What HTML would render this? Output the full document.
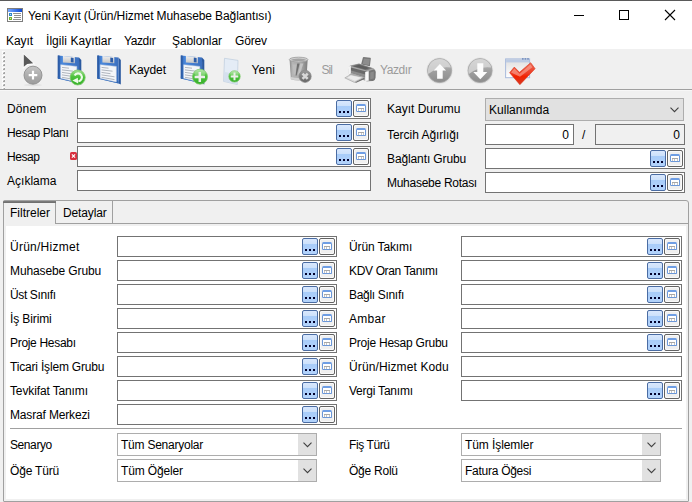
<!DOCTYPE html><html lang="tr"><head><meta charset="utf-8"><title>Yeni Kayıt (Ürün/Hizmet Muhasebe Bağlantısı)</title><style>
*{box-sizing:border-box;margin:0;padding:0}
html,body{width:692px;height:502px;overflow:hidden;background:#f0f0f0}
body{position:relative;font-family:"Liberation Sans",sans-serif;font-size:12px;color:#000}
.abs{position:absolute}
.t{position:absolute;white-space:nowrap;line-height:14px;height:14px}
.f{position:absolute;height:21px;border:1px solid #737373;background:#fff}
.f.dis{background:#f0f0f0}
.b1{position:absolute;top:1px;right:18px;width:16px;height:17px;border:1px solid #4a6ca3;border-radius:2px;background:linear-gradient(#d9e8fd 0,#cde1fb 33%,#a8ccf9 34%,#b3d3fb 100%)}
.b1 i{position:absolute;top:10px;width:2px;height:2px;background:#00002c}
.b2{position:absolute;top:1px;right:1px;width:16px;height:17px;border:1px solid #636363;border-radius:2px;background:#f0f0f0;box-shadow:inset 0 0 0 1px #fafafa}
.b2 b{position:absolute;left:2px;top:3px;width:10px;height:8px;border:1px solid #6b97d8;border-top:2px solid #6f9ee4;border-radius:1.5px;background:#fff}
.b2 b:after{content:"";position:absolute;left:1px;top:2px;width:6px;height:2px;border-top:1px solid #a8a8a8;background:linear-gradient(90deg,#c4c4c4 0 1px,transparent 1px 2.5px,#c4c4c4 2.5px 3.5px,transparent 3.5px 5px,#c4c4c4 5px 6px)}
.cb{position:absolute;height:23px;border:1px solid #adadad;background:#fff}
.cb .tx{position:absolute;left:3px;top:4px;line-height:14px;white-space:nowrap}
.cb .ar{position:absolute;top:0;right:0;width:18px;height:21px;background:#e1e1e1}
.cb svg{position:absolute;right:4px;top:8px}
</style></head><body>
<div class="abs" style="left:0;top:0;width:692px;height:49px;background:#fff"></div>
<div class="abs" style="left:0;top:0;width:692px;height:1px;background:#5a5a5a"></div>
<svg class="abs" style="left:7px;top:8px" width="16" height="14" viewBox="0 0 16 14">
<defs><linearGradient id="gIc" x1="0" y1="0" x2="1" y2="0"><stop offset="0" stop-color="#78a8ff"/><stop offset="1" stop-color="#0c48d6"/></linearGradient></defs>
<rect x="0.5" y="0.5" width="15" height="13" fill="#fff" stroke="#7d7d7d"/>
<rect x="1" y="1" width="14" height="3" fill="url(#gIc)"/>
<rect x="2" y="5" width="3" height="3" fill="#2f86c8"/><rect x="2" y="9" width="3" height="3" fill="#6fae2e"/>
<rect x="3" y="6" width="1" height="1" fill="#bfe0f4"/><rect x="3" y="10" width="1" height="1" fill="#cfe8a8"/>
<rect x="6" y="5" width="8" height="1" fill="#8f8f8f"/><rect x="7" y="7" width="7" height="1" fill="#8f8f8f"/><rect x="7" y="9" width="7" height="1" fill="#8f8f8f"/><rect x="6" y="11" width="8" height="1" fill="#8f8f8f"/>
</svg>
<div class="t" style="left:28px;top:9px;letter-spacing:-0.097px;">Yeni Kayıt (Ürün/Hizmet Muhasebe Bağlantısı)</div>
<svg class="abs" style="left:560px;top:1px" width="132" height="30" viewBox="0 0 132 30">
<rect x="14" y="14" width="10" height="1" fill="#000"/>
<rect x="59.5" y="9.5" width="9" height="9" fill="none" stroke="#000"/>
<path d="M105 9 L115 19 M115 9 L105 19" stroke="#000" stroke-width="1.1" fill="none"/>
</svg>
<div class="t" style="left:6px;top:34px;letter-spacing:-0.09px;">Kayıt</div>
<div class="t" style="left:46px;top:34px;letter-spacing:0.058px;">İlgili Kayıtlar</div>
<div class="t" style="left:124px;top:34px;letter-spacing:-0.399px;">Yazdır</div>
<div class="t" style="left:172px;top:34px;letter-spacing:-0.088px;">Şablonlar</div>
<div class="t" style="left:235px;top:34px;letter-spacing:-0.172px;">Görev</div>
<div class="abs" style="left:0;top:49px;width:692px;height:40px;background:#f0f0f0"></div>
<div class="abs" style="left:0;top:89px;width:692px;height:2px;background:linear-gradient(#a0a0a0 0 1px,#f7f7f7 1px 2px)"></div>
<svg class="abs" style="left:0;top:49px" width="692" height="40" viewBox="0 49 692 40">
<defs>
<linearGradient id="gFl" x1="0" y1="0" x2="1" y2="0"><stop offset="0" stop-color="#3568b4"/><stop offset="0.2" stop-color="#4a88dc"/><stop offset="1" stop-color="#3b6fbe"/></linearGradient>
<linearGradient id="gGr" x1="0" y1="0" x2="0" y2="1"><stop offset="0" stop-color="#a4e294"/><stop offset="0.45" stop-color="#4cc23c"/><stop offset="1" stop-color="#36b02a"/></linearGradient>
<linearGradient id="gGy" x1="0" y1="0" x2="0" y2="1"><stop offset="0" stop-color="#c6c6c6"/><stop offset="0.5" stop-color="#adadad"/><stop offset="1" stop-color="#9c9c9c"/></linearGradient>
<linearGradient id="gAr" x1="0" y1="0" x2="0" y2="1"><stop offset="0" stop-color="#c4c4c4"/><stop offset="0.5" stop-color="#a0a0a0"/><stop offset="1" stop-color="#8c8c8c"/></linearGradient>
<linearGradient id="gRd" x1="0" y1="0" x2="0" y2="1"><stop offset="0" stop-color="#ee6a55"/><stop offset="0.5" stop-color="#ee3a22"/><stop offset="0.62" stop-color="#f22200"/><stop offset="1" stop-color="#d63a24"/></linearGradient>
<linearGradient id="gTr" x1="0" y1="0" x2="1" y2="0"><stop offset="0" stop-color="#8a8a8a"/><stop offset="0.15" stop-color="#b4b4b4"/><stop offset="0.6" stop-color="#adadad"/><stop offset="1" stop-color="#7e7e7e"/></linearGradient>
<linearGradient id="gSh" x1="0" y1="0" x2="0" y2="1"><stop offset="0" stop-color="#f0f0f0"/><stop offset="1" stop-color="#c4c4c4"/></linearGradient>
<linearGradient id="gGd" x1="0" y1="0" x2="0" y2="1"><stop offset="0" stop-color="#9a9a9a"/><stop offset="1" stop-color="#666"/></linearGradient>
<linearGradient id="gWn" x1="0" y1="0" x2="0" y2="1"><stop offset="0" stop-color="#dedede"/><stop offset="0.25" stop-color="#e6e6e6"/><stop offset="1" stop-color="#ffffff"/></linearGradient>
<g id="floppy">
<path d="M21 2.5 L23.3 5 L23.3 29.4 L21.2 28.6 Z" fill="#2b599f"/>
<path d="M-0.2 0.4 L21 2.5 L21.2 28.6 L-0.2 23.6 Z" fill="url(#gFl)"/>
<path d="M-0.2 0.4 L1.6 0.6 L1.6 24 L-0.2 23.6 Z" fill="#2c5ca6"/>
<path d="M-0.2 21.5 L21.2 26.4 L21.2 28.6 L-0.2 23.6 Z" fill="#2f66b4" opacity="0.8"/>
<path d="M4.9 0.9 L16.8 2.1 L16.8 8.3 L4.9 7.4 Z" fill="url(#gSh)"/>
<path d="M12.8 2.6 L15.6 2.9 L15.6 7.6 L12.8 7.3 Z" fill="#2d5ca6"/>
<path d="M2.7 9.7 L18.8 11.4 L18.8 26.9 L2.7 23.3 Z" fill="#f4f6f9" stroke="#c9d3e2" stroke-width="0.5"/>
<path d="M4 12.4 L11 13.2 M4 14.9 L15 16.2 M4 17.4 L13 18.7 M4 19.9 L17 21.8 M4 22.3 L17 24.6" stroke="#9da3ad" stroke-width="0.8" fill="none"/>
</g>
</defs>
<!-- grip -->
<g><rect x="2" y="51" width="3" height="3" fill="#fdfdfd"/><rect x="3" y="52" width="2" height="2" fill="#a6a6a6"/><rect x="3" y="52" width="1" height="1" fill="#d4d4d4"/><rect x="2" y="55" width="3" height="3" fill="#fdfdfd"/><rect x="3" y="56" width="2" height="2" fill="#a6a6a6"/><rect x="3" y="56" width="1" height="1" fill="#d4d4d4"/><rect x="2" y="59" width="3" height="3" fill="#fdfdfd"/><rect x="3" y="60" width="2" height="2" fill="#a6a6a6"/><rect x="3" y="60" width="1" height="1" fill="#d4d4d4"/><rect x="2" y="63" width="3" height="3" fill="#fdfdfd"/><rect x="3" y="64" width="2" height="2" fill="#a6a6a6"/><rect x="3" y="64" width="1" height="1" fill="#d4d4d4"/><rect x="2" y="67" width="3" height="3" fill="#fdfdfd"/><rect x="3" y="68" width="2" height="2" fill="#a6a6a6"/><rect x="3" y="68" width="1" height="1" fill="#d4d4d4"/><rect x="2" y="71" width="3" height="3" fill="#fdfdfd"/><rect x="3" y="72" width="2" height="2" fill="#a6a6a6"/><rect x="3" y="72" width="1" height="1" fill="#d4d4d4"/><rect x="2" y="75" width="3" height="3" fill="#fdfdfd"/><rect x="3" y="76" width="2" height="2" fill="#a6a6a6"/><rect x="3" y="76" width="1" height="1" fill="#d4d4d4"/><rect x="2" y="79" width="3" height="3" fill="#fdfdfd"/><rect x="3" y="80" width="2" height="2" fill="#a6a6a6"/><rect x="3" y="80" width="1" height="1" fill="#d4d4d4"/><rect x="2" y="83" width="3" height="3" fill="#fdfdfd"/><rect x="3" y="84" width="2" height="2" fill="#a6a6a6"/><rect x="3" y="84" width="1" height="1" fill="#d4d4d4"/><rect x="2" y="87" width="3" height="3" fill="#fdfdfd"/><rect x="3" y="88" width="2" height="2" fill="#a6a6a6"/><rect x="3" y="88" width="1" height="1" fill="#d4d4d4"/></g>
<!-- cursor + plus -->
<path d="M22.8 52.4 L22.8 69 L27.6 65.2 L35.4 64.4 Z" fill="#fbfbfb"/><path d="M23.8 54.6 L23.8 66.8 L27.2 64 L33.2 63.3 Z" fill="#595959"/>
<ellipse cx="33" cy="85" rx="9" ry="1.2" fill="#e2e2e2"/>
<circle cx="33" cy="75.2" r="9" fill="url(#gGy)" stroke="#8e8e8e" stroke-width="0.9"/>
<path d="M33 70.8 V79.4 M28.7 75.1 H37.3" stroke="#fff" stroke-width="2.2"/>
<!-- floppy + refresh -->
<use href="#floppy" x="58" y="55"/>
<circle cx="77.7" cy="77.5" r="7.5" fill="url(#gGr)" stroke="#7cc868" stroke-width="0.8"/>
<path d="M74.6 75.4 A3.9 3.9 0 1 1 78.4 81.2" fill="none" stroke="#eefbea" stroke-width="2.1"/>
<path d="M72.4 80.4 L77.8 77.8 L78.2 83.4 Z" fill="#eefbea"/>
<!-- floppy -->
<use href="#floppy" x="97.5" y="55"/>
<text x="129" y="74" font-size="12" letter-spacing="-0.072">Kaydet</text>
<!-- floppy + plus -->
<use href="#floppy" x="181" y="55"/>
<circle cx="200" cy="76.7" r="7.5" fill="url(#gGr)" stroke="#7cc868" stroke-width="0.8"/>
<ellipse cx="200" cy="73" rx="5.6" ry="3.4" fill="#fff" opacity="0.22"/><path d="M199.8 71.9 V81.9 M194.6 76.9 H205" stroke="#eceeea" stroke-width="2.5"/>
<!-- new doc + plus -->
<path d="M224.5 58.3 L238 60.4 L237.3 84.5 L223.6 81.4 Z" fill="#e4ecf6" stroke="#bccbdd" stroke-width="0.7"/>
<path d="M224.3 72 L237.6 74 L237.2 84.2 L223.9 81.2 Z" fill="#d5e0ee"/>
<circle cx="234.5" cy="76.4" r="5.7" fill="url(#gGr)" stroke="#7cc868" stroke-width="0.7"/>
<ellipse cx="234.5" cy="73.6" rx="4.2" ry="2.6" fill="#fff" opacity="0.22"/><path d="M234.5 72.6 V80.2 M230.7 76.4 H238.3" stroke="#eceeea" stroke-width="2"/>
<text x="251.5" y="74" font-size="12" letter-spacing="0.193">Yeni</text>
<!-- trash (disabled) -->
<path d="M289.6 60 L307.6 60 L306.4 79.2 Q298.5 81.6 290.9 79.2 Z" fill="url(#gTr)"/>
<path d="M291 77 Q298.5 79 306.3 77 L306.3 79.3 Q298.5 81.6 291 79.3 Z" fill="#d2d2d2"/>
<path d="M292.5 64.5 L296.6 64.5 L295.4 74.5 L293.6 74.5 Z" fill="#bdbdbd"/>
<path d="M297.2 63.5 L299.6 63.5 L296.6 75.5 L295.6 75.5 Z" fill="#6f6f6f"/>
<path d="M300.4 63.5 L303.4 63.5 L299.6 74.5 L298 74.5 Z" fill="#c4c4c4"/>
<ellipse cx="298.6" cy="59.6" rx="9.3" ry="2.4" fill="#d2d2d2" stroke="#a2a2a2" stroke-width="0.9"/>
<ellipse cx="298.6" cy="59.8" rx="7.4" ry="1.3" fill="#a4a4a4"/>
<circle cx="305.1" cy="76.3" r="6.1" fill="url(#gGd)" stroke="#8a8a8a" stroke-width="0.7"/>
<path d="M302.5 73.7 L307.7 78.9 M307.7 73.7 L302.5 78.9" stroke="#d8d8d8" stroke-width="2.6"/>
<text x="321.5" y="74" font-size="12" fill="#9b9b9b" letter-spacing="-0.922">Sil</text>
<!-- printer (disabled) -->
<path d="M361.1 64.6 L362.9 57.4 Q363 57 363.6 57 L370.2 57.8 Q370.9 57.9 370.8 58.6 L369.9 66.2 Z" fill="#767676"/>
<path d="M362.6 64 L364 58.4 L369.8 59 L369 65 Z" fill="#8d8d8d"/>
<path d="M349.2 66.6 Q349.6 65.6 351 65.2 L359 63.4 L373.5 68.2 Q375.6 69.4 375.6 72 L375.4 78 Q375.2 80.6 372.6 81 L367 81.6 L349 74.6 Q348.2 70 349.2 66.6 Z" fill="#a9a9a9"/>
<path d="M350.6 66 L359 63.8 L372.6 68.2 L366.4 70.6 Z" fill="#7c7c7c"/>
<path d="M353 66.2 L359.2 64.8 L369.6 68 L365.6 69.4 Z" fill="#5e5e5e"/>
<path d="M350.8 67.6 L366.4 71.6 L366.4 77.6 L350.8 72.4 Z" fill="#6a6a6a"/>
<path d="M351 70.4 L366.4 74.8 L366.4 77.6 L351 72.8 Z" fill="#8c8c8c"/>
<path d="M348.5 66.8 Q349.3 65.8 350.8 66 L350.8 73.4 L349 74.4 Q348 70.4 348.5 66.8 Z" fill="#f4f4f4"/>
<path d="M365.2 72 L368.8 71.2 L368.8 80.6 L365.2 81 Z" fill="#fafafa"/>
<path d="M368.8 71 L373.6 69.4 Q375.6 70.2 375.6 72 L375.4 78 Q375.2 80.6 372.6 81 L368.8 80.8 Z" fill="#757575"/>
<path d="M370.2 72.4 L373.8 71.6 L373.8 78.6 L370.2 79.2 Z" fill="#8a8a8a"/>
<path d="M354.6 80 L364 76.8 L364.6 79 L355.6 83 Z" fill="#6e6e6e"/>
<path d="M344.8 77.9 L350.6 74.6 L364 77.4 L354.4 82.4 Z" fill="#d9d9d9" stroke="#a8a8a8" stroke-width="0.7"/>
<path d="M347.4 77.6 L351 75.6 L361.2 77.8 L355 80.8 Z" fill="#ececec"/>
<text x="380" y="74" font-size="12" fill="#9b9b9b" letter-spacing="-0.399">Yazdır</text>
<!-- up/down -->
<circle cx="439.6" cy="70.6" r="13.2" fill="#e2e2e2"/>
<circle cx="439.6" cy="70.6" r="12" fill="url(#gAr)" stroke="#a6a6a6" stroke-width="0.8"/>
<path d="M428.4 74 A11.6 11.6 0 0 1 450.8 67.6 Q439 66 428.4 74 Z" fill="#dcdcdc" opacity="0.75"/>
<path d="M439.9 64 L446.1 70.4 L442.7 70.4 L442.7 78.8 L437.1 78.8 L437.1 70.4 L433.7 70.4 Z" fill="#fcfcfc"/>
<circle cx="480.1" cy="70.6" r="13.2" fill="#e2e2e2"/>
<circle cx="480.1" cy="70.6" r="12" fill="url(#gAr)" stroke="#a6a6a6" stroke-width="0.8"/>
<path d="M468.9 74 A11.6 11.6 0 0 1 491.3 67.6 Q479.5 66 468.9 74 Z" fill="#dcdcdc" opacity="0.75"/>
<path d="M480.3 79.2 L487.3 72 L483.3 72 L483.3 63.2 L477.3 63.2 L477.3 72 L473.3 72 Z" fill="#fcfcfc"/>
<!-- window + check -->
<rect x="505.6" y="58.9" width="24" height="18.8" fill="url(#gWn)" stroke="#a9bbdc" stroke-width="1"/>
<rect x="506.1" y="59.4" width="23" height="3" fill="#bccbe4"/>
<rect x="522" y="58.2" width="1.6" height="1.4" fill="#6a86b8"/><rect x="524.6" y="58.2" width="1.6" height="1.4" fill="#6a86b8"/><rect x="527.2" y="58.2" width="1.6" height="1.4" fill="#6a86b8"/>
<path d="M509.6 72.7 L514.3 67.1 L519.5 72.3 L530.7 62.7 L535.1 68.7 L519.9 84.7 Z" fill="url(#gRd)" stroke="#d8391f" stroke-width="0.6" stroke-linejoin="round"/>
<path d="M511 72.4 L514.4 68.6 L519.6 73.8 L530.4 64.4 L532.4 67.2 L520 76.8 Z" fill="#fbb5a6" opacity="0.55"/>
</svg>

<div class="t" style="left:7px;top:102px;letter-spacing:0.141px;">Dönem</div>
<div class="f " style="left:77px;top:98px;width:294px"><span class="b1"><i style="left:2px"></i><i style="left:6px"></i><i style="left:10px"></i></span><span class="b2"><b></b></span></div>
<div class="t" style="left:7px;top:126px;letter-spacing:-0.362px;">Hesap Planı</div>
<div class="f " style="left:77px;top:122px;width:294px"><span class="b1"><i style="left:2px"></i><i style="left:6px"></i><i style="left:10px"></i></span><span class="b2"><b></b></span></div>
<div class="t" style="left:7px;top:150px;letter-spacing:-0.422px;">Hesap</div>
<div class="f " style="left:77px;top:146px;width:294px"><span class="b1"><i style="left:2px"></i><i style="left:6px"></i><i style="left:10px"></i></span><span class="b2"><b></b></span></div>
<div class="t" style="left:7px;top:174px;letter-spacing:0.02px;">Açıklama</div>
<div class="f " style="left:77px;top:170px;width:294px"></div>
<svg class="abs" style="left:70px;top:152px" width="7" height="8" viewBox="0 0 7 8"><rect x="0" y="0" width="7" height="8" rx="1.6" fill="#d8303e"/><path d="M1.9 2.4 L5.1 5.6 M5.1 2.4 L1.9 5.6" stroke="#fff" stroke-width="1.25"/></svg>
<div class="t" style="left:387px;top:102px;letter-spacing:0.004px;">Kayıt Durumu</div>
<div class="cb" style="left:485px;top:98px;width:199px;background:#e1e1e1;"><span class="tx" style="letter-spacing:0.017px;">Kullanımda</span><svg width="9" height="6" viewBox="0 0 9 6"><path d="M0.5 0.6 L4.5 4.6 L8.5 0.6" fill="none" stroke="#404040" stroke-width="1.1"/></svg></div>
<div class="t" style="left:387px;top:128px;letter-spacing:-0.036px;">Tercih Ağırlığı</div>
<div class="f " style="left:485px;top:124px;width:89px"><span class="t" style="right:4px;top:3px">0</span></div>
<div class="t" style="left:582px;top:128px;">/</div>
<div class="f dis" style="left:595px;top:124px;width:90px"><span class="t" style="right:4px;top:3px">0</span></div>
<div class="t" style="left:387px;top:152px;letter-spacing:-0.117px;">Bağlantı Grubu</div>
<div class="f " style="left:485px;top:148px;width:200px"><span class="b1"><i style="left:2px"></i><i style="left:6px"></i><i style="left:10px"></i></span><span class="b2"><b></b></span></div>
<div class="t" style="left:387px;top:176px;letter-spacing:-0.276px;">Muhasebe Rotası</div>
<div class="f " style="left:485px;top:172px;width:200px"><span class="b1"><i style="left:2px"></i><i style="left:6px"></i><i style="left:10px"></i></span><span class="b2"><b></b></span></div>
<div class="abs" style="left:3px;top:200px;width:686px;height:302px;border:1px solid #a0a0a0;border-radius:3px 3px 1px 1px;background:#f0f0f0"></div>
<div class="abs" style="left:6px;top:226px;width:680px;height:273px;background:#fff"></div>
<div class="abs" style="left:55px;top:223px;width:633px;height:1px;background:#a0a0a0"></div>
<div class="abs" style="left:55px;top:201px;width:1px;height:23px;background:#a0a0a0"></div>
<div class="abs" style="left:3px;top:200px;width:53px;height:3px;background:linear-gradient(#a2a2a2 0 1px,#7a7a7a 1px 2px,#707070 2px 3px);border-radius:2px 0 0 0"></div>
<div class="abs" style="left:112px;top:201px;width:1px;height:22px;background:#a0a0a0"></div>
<div class="t" style="left:10px;top:206px;letter-spacing:-0.002px;">Filtreler</div>
<div class="t" style="left:63px;top:206px;letter-spacing:-0.141px;">Detaylar</div>
<div class="t" style="left:10px;top:240px;letter-spacing:0.256px;">Ürün/Hizmet</div>
<div class="f " style="left:117px;top:236px;width:220px"><span class="b1"><i style="left:2px"></i><i style="left:6px"></i><i style="left:10px"></i></span><span class="b2"><b></b></span></div>
<div class="t" style="left:10px;top:264px;letter-spacing:-0.114px;">Muhasebe Grubu</div>
<div class="f " style="left:117px;top:260px;width:220px"><span class="b1"><i style="left:2px"></i><i style="left:6px"></i><i style="left:10px"></i></span><span class="b2"><b></b></span></div>
<div class="t" style="left:10px;top:288px;letter-spacing:-0.373px;">Üst Sınıfı</div>
<div class="f " style="left:117px;top:284px;width:220px"><span class="b1"><i style="left:2px"></i><i style="left:6px"></i><i style="left:10px"></i></span><span class="b2"><b></b></span></div>
<div class="t" style="left:10px;top:312px;letter-spacing:-0.115px;">İş Birimi</div>
<div class="f " style="left:117px;top:308px;width:220px"><span class="b1"><i style="left:2px"></i><i style="left:6px"></i><i style="left:10px"></i></span><span class="b2"><b></b></span></div>
<div class="t" style="left:10px;top:336px;letter-spacing:-0.307px;">Proje Hesabı</div>
<div class="f " style="left:117px;top:332px;width:220px"><span class="b1"><i style="left:2px"></i><i style="left:6px"></i><i style="left:10px"></i></span><span class="b2"><b></b></span></div>
<div class="t" style="left:10px;top:360px;letter-spacing:-0.181px;">Ticari İşlem Grubu</div>
<div class="f " style="left:117px;top:356px;width:220px"><span class="b1"><i style="left:2px"></i><i style="left:6px"></i><i style="left:10px"></i></span><span class="b2"><b></b></span></div>
<div class="t" style="left:10px;top:384px;letter-spacing:-0.129px;">Tevkifat Tanımı</div>
<div class="f " style="left:117px;top:380px;width:220px"><span class="b1"><i style="left:2px"></i><i style="left:6px"></i><i style="left:10px"></i></span><span class="b2"><b></b></span></div>
<div class="t" style="left:10px;top:408px;letter-spacing:-0.155px;">Masraf Merkezi</div>
<div class="f " style="left:117px;top:404px;width:220px"><span class="b1"><i style="left:2px"></i><i style="left:6px"></i><i style="left:10px"></i></span><span class="b2"><b></b></span></div>
<div class="t" style="left:349px;top:240px;letter-spacing:-0.122px;">Ürün Takımı</div>
<div class="f " style="left:461px;top:236px;width:221px"><span class="b1"><i style="left:2px"></i><i style="left:6px"></i><i style="left:10px"></i></span><span class="b2"><b></b></span></div>
<div class="t" style="left:349px;top:264px;letter-spacing:-0.345px;">KDV Oran Tanımı</div>
<div class="f " style="left:461px;top:260px;width:221px"><span class="b1"><i style="left:2px"></i><i style="left:6px"></i><i style="left:10px"></i></span><span class="b2"><b></b></span></div>
<div class="t" style="left:349px;top:288px;letter-spacing:-0.314px;">Bağlı Sınıfı</div>
<div class="f " style="left:461px;top:284px;width:221px"><span class="b1"><i style="left:2px"></i><i style="left:6px"></i><i style="left:10px"></i></span><span class="b2"><b></b></span></div>
<div class="t" style="left:349px;top:312px;letter-spacing:0.289px;">Ambar</div>
<div class="f " style="left:461px;top:308px;width:221px"><span class="b1"><i style="left:2px"></i><i style="left:6px"></i><i style="left:10px"></i></span><span class="b2"><b></b></span></div>
<div class="t" style="left:349px;top:336px;letter-spacing:-0.233px;">Proje Hesap Grubu</div>
<div class="f " style="left:461px;top:332px;width:221px"><span class="b1"><i style="left:2px"></i><i style="left:6px"></i><i style="left:10px"></i></span><span class="b2"><b></b></span></div>
<div class="t" style="left:349px;top:360px;letter-spacing:0.114px;">Ürün/Hizmet Kodu</div>
<div class="f " style="left:461px;top:356px;width:221px"></div>
<div class="t" style="left:349px;top:384px;letter-spacing:-0.226px;">Vergi Tanımı</div>
<div class="f " style="left:461px;top:380px;width:221px"><span class="b1"><i style="left:2px"></i><i style="left:6px"></i><i style="left:10px"></i></span><span class="b2"><b></b></span></div>
<div class="abs" style="left:10px;top:428px;width:672px;height:1px;background:#a0a0a0"></div>
<div class="t" style="left:10px;top:438px;letter-spacing:-0.409px;">Senaryo</div>
<div class="cb" style="left:117px;top:433px;width:200px;"><span class="tx" style="letter-spacing:-0.237px;">Tüm Senaryolar</span><span class="ar"></span><svg width="9" height="6" viewBox="0 0 9 6"><path d="M0.5 0.6 L4.5 4.6 L8.5 0.6" fill="none" stroke="#404040" stroke-width="1.1"/></svg></div>
<div class="t" style="left:10px;top:464px;letter-spacing:-0.176px;">Öğe Türü</div>
<div class="cb" style="left:117px;top:459px;width:200px;"><span class="tx" style="letter-spacing:-0.14px;">Tüm Öğeler</span><span class="ar"></span><svg width="9" height="6" viewBox="0 0 9 6"><path d="M0.5 0.6 L4.5 4.6 L8.5 0.6" fill="none" stroke="#404040" stroke-width="1.1"/></svg></div>
<div class="t" style="left:349px;top:438px;letter-spacing:-0.4px;">Fiş Türü</div>
<div class="cb" style="left:461px;top:433px;width:200px;"><span class="tx" style="letter-spacing:-0.086px;">Tüm İşlemler</span><span class="ar"></span><svg width="9" height="6" viewBox="0 0 9 6"><path d="M0.5 0.6 L4.5 4.6 L8.5 0.6" fill="none" stroke="#404040" stroke-width="1.1"/></svg></div>
<div class="t" style="left:349px;top:464px;letter-spacing:-0.243px;">Öğe Rolü</div>
<div class="cb" style="left:461px;top:459px;width:200px;"><span class="tx" style="letter-spacing:-0.27px;">Fatura Öğesi</span><span class="ar"></span><svg width="9" height="6" viewBox="0 0 9 6"><path d="M0.5 0.6 L4.5 4.6 L8.5 0.6" fill="none" stroke="#404040" stroke-width="1.1"/></svg></div>
</body></html>
